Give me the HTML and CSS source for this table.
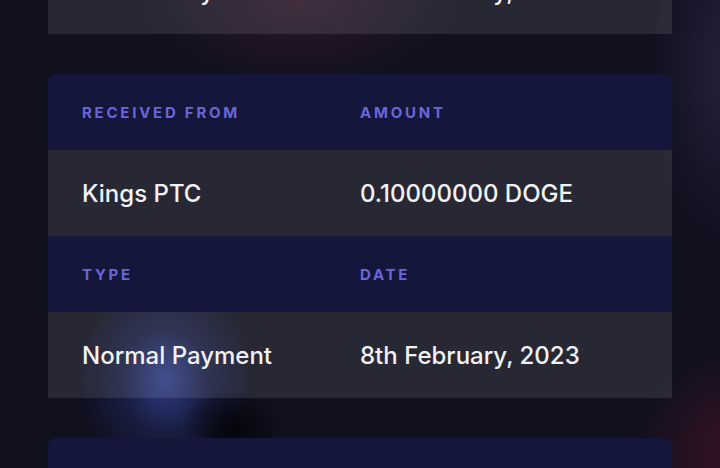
FILE: index.html
```html
<!DOCTYPE html>
<html lang="en">
<head>
<meta charset="utf-8">
<title>Transactions</title>
<link rel="stylesheet" href="styles.css">
</head>
<body>
<main class="list">
  <section class="card card-prev">
    <div class="row head"><span class="label">RECEIVED FROM</span><span class="label">AMOUNT</span></div>
    <div class="row data"><span class="value">Kings PTC</span><span class="value">0.10000000 DOGE</span></div>
    <div class="row head"><span class="label">TYPE</span><span class="label">DATE</span></div>
    <div class="row data"><span class="value">Normal Payment</span><span class="value">8th February, 2023</span></div>
  </section>
  <section class="card">
    <div class="row head"><span class="label">RECEIVED FROM</span><span class="label">AMOUNT</span></div>
    <div class="row data"><span class="value">Kings PTC</span><span class="value">0.10000000 DOGE</span></div>
    <div class="row head"><span class="label">TYPE</span><span class="label">DATE</span></div>
    <div class="row data"><span class="value">Normal Payment</span><span class="value">8th February, 2023</span></div>
  </section>
  <section class="card">
    <div class="row head"><span class="label">RECEIVED FROM</span><span class="label">AMOUNT</span></div>
    <div class="row data"><span class="value">Kings PTC</span><span class="value">0.10000000 DOGE</span></div>
  </section>
</main>
</body>
</html>
```
FILE: styles.css
```css
html, body {
  margin: 0;
  padding: 0;
  height: 100%;
  overflow: hidden;
}
body {
  font-family: Inter, "Noto Sans", sans-serif;
  background-color: #10101f;
  background-image:
    radial-gradient(ellipse 50px 40px at 232px 428px, rgba(4,4,10,0.95) 0, rgba(4,4,10,0) 100%),
    radial-gradient(ellipse 85px 105px at 165px 380px, rgba(50,68,150,0.85) 0, rgba(40,55,130,0.35) 50%, rgba(30,40,100,0) 100%),
    radial-gradient(ellipse 160px 90px at 300px 0px, rgba(110,40,70,0.3) 0, rgba(110,40,70,0) 100%),
    radial-gradient(ellipse 80px 180px at 730px 70px, rgba(55,52,85,0.5) 0, rgba(55,52,85,0) 100%),
    radial-gradient(ellipse 110px 110px at 740px 455px, rgba(100,20,45,0.5) 0, rgba(100,20,45,0) 100%);
}
.list {
  display: flex;
  flex-direction: column;
  gap: 40px;
  padding: 0 48px;
  margin-top: -290px;
}
.card {
  border-radius: 8px 8px 0 0;
  overflow: hidden;
}
.row {
  display: grid;
  grid-template-columns: 278px 1fr;
  align-items: center;
  padding: 0 34px;
}
.head {
  height: 76px;
  background: #15163b;
}
.data {
  height: 86px;
  background: rgba(255, 255, 255, 0.1);
}
.label {
  font-size: 15px;
  font-weight: 700;
  letter-spacing: 2.75px;
  color: #6767d9;
}
.value {
  font-size: 24px;
  font-weight: 500;
  color: #f2f2f5;
}
```
